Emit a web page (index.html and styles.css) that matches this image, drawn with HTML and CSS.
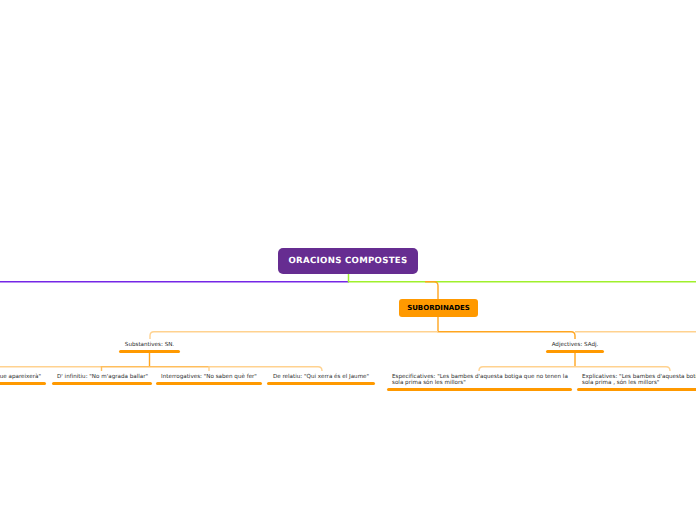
FILE: index.html
```html
<!DOCTYPE html>
<html lang="ca">
<head>
<meta charset="utf-8">
<title>Oracions compostes</title>
<link rel="stylesheet" href="styles.css">
</head>
<body>
<main class="map">
  <svg class="links" width="696" height="520" viewBox="0 0 696 520" fill="none">
    <path class="purple" d="M349 281.700H0"/>
    <path class="green" d="M348.500 274V281.700H696"/>
    <path class="orange strong" d="M425 281.700H434Q438 281.700 438 285.700V299"/>
    <path class="orange strong" d="M438 317V331.700H571Q575 331.700 575 335.700V339"/>
    <path class="pale strong" d="M438 331.700H154Q150 331.700 150 335.700V339"/>
    <path class="pale strong" d="M575 331.700H696"/>
    <path class="orange strong" d="M149.500 353V366"/>
    <path class="pale strong" d="M101.500 366.700H0"/>
    <path class="mid strong" d="M101.500 371V366.700H209"/>
    <path class="pale strong" d="M209 371V366.700H318Q322 366.700 322 370.700V371"/>
    <path class="orange strong" d="M575 353V366"/>
    <path class="pale strong" d="M575 366.700H483Q479 366.700 479 370.700V371"/>
    <path class="pale strong" d="M575 366.700H666Q670 366.700 670 370.700V371"/>
  </svg>

  <div class="node root">ORACIONS COMPOSTES</div>
  <div class="node main">SUBORDINADES</div>

  <div class="node leaf substantives">Substantives: SN.</div>
  <div class="node leaf adjectives">Adjectives: SAdj.</div>

  <div class="node leaf first">Que apareixerà"</div>
  <div class="node leaf infinitiu">D' infinitiu: "No m'agrada ballar"</div>
  <div class="node leaf interrogatives">Interrogatives: "No saben què fer"</div>
  <div class="node leaf relatiu">De relatiu: "Qui xerra és el Jaume"</div>
  <div class="node leaf especificatives">Especificatives: "Les bambes d'aquesta botiga que no tenen la sola prima són les millors"</div>
  <div class="node leaf explicatives">Explicatives: "Les bambes d'aquesta botiga, que no tenen la sola prima , són les millors"</div>
</main>
</body>
</html>
```
FILE: styles.css
```css
html, body {
  margin: 0;
  padding: 0;
  background: #fff;
  overflow: hidden;
}
.map {
  position: relative;
  width: 696px;
  height: 520px;
  overflow: hidden;
  font-family: "DejaVu Sans", Verdana, sans-serif;
  text-rendering: geometricPrecision;
}
.links {
  position: absolute;
  left: 0;
  top: 0;
}
.purple { stroke: #7526e6; stroke-width: 1.500px; }
.green { stroke: #a0f02c; stroke-width: 1.500px; }
.orange { stroke: #ffa51f; }
.mid { stroke: #ffbe5c; }
.pale { stroke: #ffd28f; }
.strong { stroke-width: 1.400px; }
.node {
  position: absolute;
  box-sizing: border-box;
}
.root {
  left: 278px;
  top: 248px;
  width: 140px;
  height: 26px;
  border-radius: 5px;
  background: #662d91;
  color: #fff;
  font-size: 8.600px;
  font-weight: 700;
  line-height: 27px;
  text-align: center;
  letter-spacing: 0.3px;
}
.main {
  left: 399px;
  top: 299px;
  width: 79px;
  height: 18px;
  border-radius: 3px;
  background: #ff9900;
  color: #000;
  font-size: 7px;
  font-weight: 700;
  line-height: 18px;
  text-align: center;
}
.leaf {
  color: #2b2b2b;
  font-size: 5.600px;
  line-height: 6.500px;
  padding: 1.500px 5px 0;
  white-space: nowrap;
}
.leaf::after {
  content: "";
  position: absolute;
  left: 0;
  right: 0;
  bottom: 0;
  height: 3px;
  border-radius: 2px;
  background: #ff9900;
}
.substantives { left: 119px; top: 340px; width: 61px; height: 13px; text-align: center; }
.adjectives { left: 546px; top: 340px; width: 58px; height: 13px; text-align: center; }
.first { left: -40px; top: 372px; width: 86px; height: 13px; text-align: right; }
.infinitiu { left: 52px; top: 372px; width: 100px; height: 13px; text-align: center; }
.interrogatives { left: 156px; top: 372px; width: 106px; height: 13px; text-align: center; }
.relatiu { left: 267px; top: 372px; width: 108px; height: 13px; text-align: center; }
.especificatives { left: 387px; top: 372px; width: 185px; height: 19px; white-space: normal; padding-right: 2px; }
.explicatives { left: 577px; top: 372px; width: 185px; height: 19px; white-space: normal; padding-right: 2px; }
```
